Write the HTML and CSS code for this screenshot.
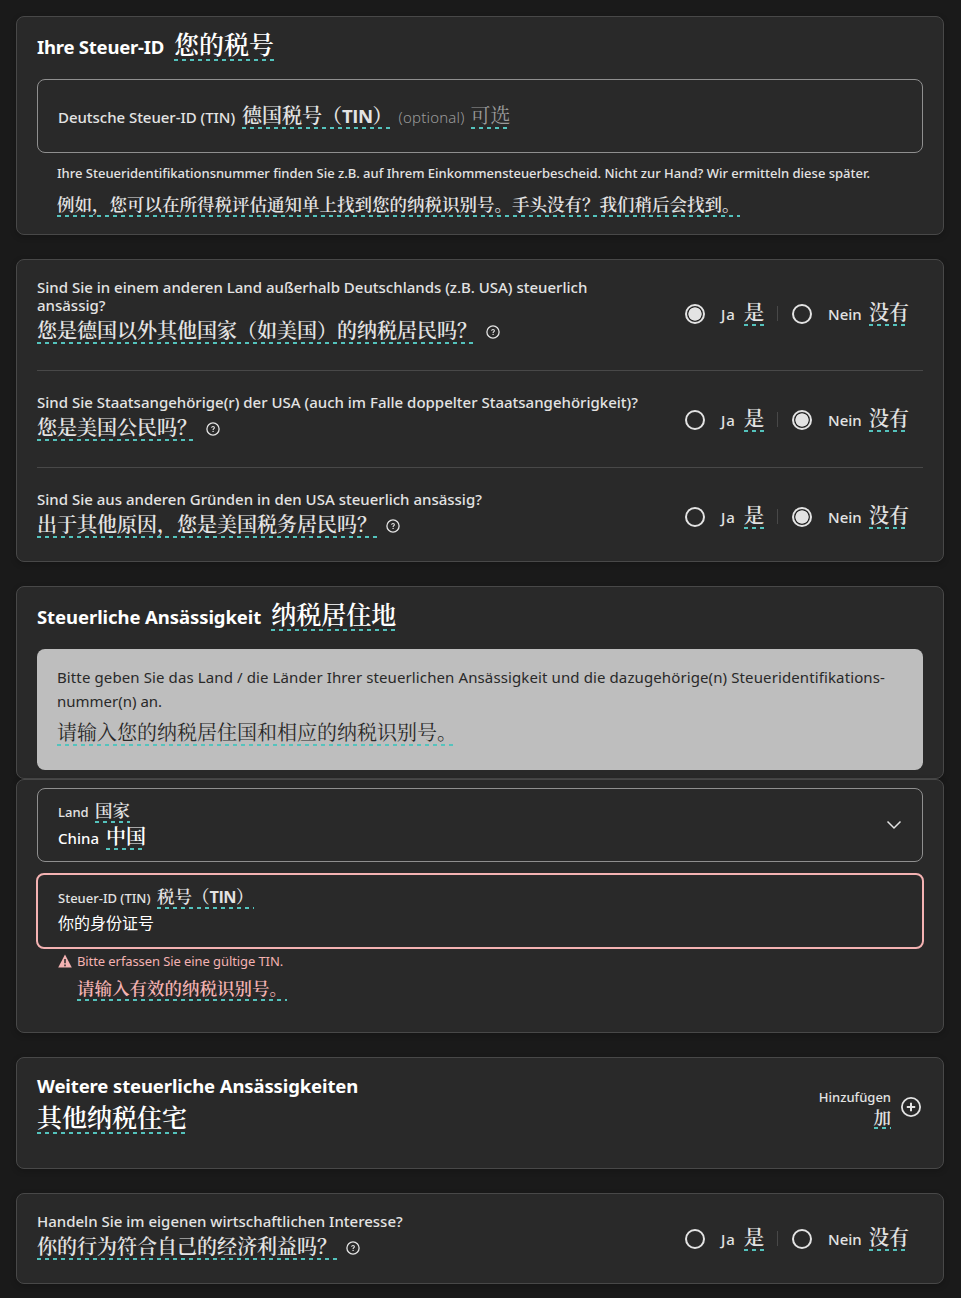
FILE: index.html
```
<!DOCTYPE html>
<html lang="de">
<head>
<meta charset="utf-8">
<title>Steuerliche Ansässigkeit</title>
<link rel="stylesheet" href="styles.css">
</head>
<body>
<svg class="defs" aria-hidden="true">
  <symbol id="help" viewBox="0 0 14 14">
    <circle cx="7" cy="7" r="6.1" fill="none" stroke="currentColor" stroke-width="1.3"/>
    <path d="M5.600 5.700C5.700 4.900 6.200 4.500 7 4.500c.9 0 1.400.5 1.400 1.200C8.400 6.600 7.100 6.700 7.100 7.900" fill="none" stroke="currentColor" stroke-width="1.1"/>
    <circle cx="7.100" cy="9.400" r=".7" fill="currentColor"/>
  </symbol>
</svg>
<main class="page">
  <section class="card card-id">
    <div class="line title"><h2 class="tight">Ihre Steuer-ID</h2><span class="zh zh-xl">您的税号</span></div>
    <div class="field field-id">
      <div class="line"><span class="label-lg label-tin">Deutsche Steuer-ID (TIN)</span><span class="zh zh-lg gap7">德国税号（<b>TIN</b>）</span><span class="optional">(optional)</span><span class="zh zh-lg zh-muted">可选</span></div>
    </div>
    <p class="hint">Ihre Steueridentifikationsnummer finden Sie z.B. auf Ihrem Einkommensteuerbescheid. Nicht zur Hand? Wir ermitteln diese später.</p>
    <span class="zh zh-md hint-zh">例如，您可以在所得税评估通知单上找到您的纳税识别号。手头没有？我们稍后会找到。</span>
  </section>

  <section class="card card-questions">
    <div class="question q-first">
      <div class="q-text">
        <p>Sind Sie in einem anderen Land außerhalb Deutschlands (z.B. USA) steuerlich<br>ansässig?</p>
        <div class="q-zh"><span class="zh zh-lg">您是德国以外其他国家（如美国）的纳税居民吗？</span><svg class="help"><use href="#help"/></svg></div>
      </div>
      <div class="choices"><i class="radio on"></i><span class="label-lg ja">Ja</span><span class="zh zh-lg">是</span><i class="sep"></i><i class="radio"></i><span class="label-lg nein">Nein</span><span class="zh zh-lg">没有</span></div>
    </div>
    <div class="question">
      <div class="q-text">
        <p>Sind Sie Staatsangehörige(r) der USA (auch im Falle doppelter Staatsangehörigkeit)?</p>
        <div class="q-zh"><span class="zh zh-lg">您是美国公民吗？</span><svg class="help"><use href="#help"/></svg></div>
      </div>
      <div class="choices"><i class="radio"></i><span class="label-lg ja">Ja</span><span class="zh zh-lg">是</span><i class="sep"></i><i class="radio on"></i><span class="label-lg nein">Nein</span><span class="zh zh-lg">没有</span></div>
    </div>
    <div class="question">
      <div class="q-text">
        <p>Sind Sie aus anderen Gründen in den USA steuerlich ansässig?</p>
        <div class="q-zh"><span class="zh zh-lg">出于其他原因，您是美国税务居民吗？</span><svg class="help"><use href="#help"/></svg></div>
      </div>
      <div class="choices"><i class="radio"></i><span class="label-lg ja">Ja</span><span class="zh zh-lg">是</span><i class="sep"></i><i class="radio on"></i><span class="label-lg nein">Nein</span><span class="zh zh-lg">没有</span></div>
    </div>
  </section>

  <section class="card card-residence">
    <div class="line title"><h2 class="loose">Steuerliche Ansässigkeit</h2><span class="zh zh-xl">纳税居住地</span></div>
    <div class="info">
      <p>Bitte geben Sie das Land / die Länder Ihrer steuerlichen Ansässigkeit und die dazugehörige(n) Steueridentifikations-<br><span class="info-rest">nummer(n) an.</span></p>
      <span class="zh zh-lg">请输入您的纳税居住国和相应的纳税识别号。</span>
    </div>
  </section>

  <section class="card card-country">
    <div class="field field-country">
      <div>
        <div class="line line-sm"><span class="label-sm">Land</span><span class="zh zh-md">国家</span></div>
        <div class="line line-value"><span class="label-lg">China</span><span class="zh zh-lg">中国</span></div>
      </div>
      <svg class="chevron" viewBox="0 0 16 10"><path d="M1.500 1.500 8 8l6.500-6.500" fill="none" stroke="currentColor" stroke-width="1.500"/></svg>
    </div>
    <div class="field field-error">
      <div class="line line-sm"><span class="label-sm">Steuer-ID (TIN)</span><span class="zh zh-md">税号（<b>TIN</b>）</span></div>
      <div class="value">你的身份证号</div>
    </div>
    <div class="error">
      <svg class="warn" viewBox="0 0 14 14"><path d="M7 .5 13.800 13.500H.2z" fill="currentColor"/><path d="M7 5v4.300M7 10.500v1.700" stroke="#292929" stroke-width="1.500"/></svg>
      <div><p>Bitte erfassen Sie eine gültige TIN.</p><span class="zh zh-md">请输入有效的纳税识别号。</span></div>
    </div>
  </section>

  <section class="card card-more">
    <div><h2>Weitere steuerliche Ansässigkeiten</h2><span class="zh zh-xl">其他纳税住宅</span></div>
    <div class="add">
      <div class="add-text"><span class="label-sm">Hinzufügen</span><span class="zh zh-md">加</span></div>
      <svg class="plus" viewBox="0 0 20 20"><circle cx="10" cy="10" r="9.100" fill="none" stroke="currentColor" stroke-width="1.800"/><path d="M10 5.800v8.400M5.800 10h8.400" stroke="currentColor" stroke-width="2"/></svg>
    </div>
  </section>

  <section class="card card-last">
    <div class="question q-last">
      <div class="q-text">
        <p>Handeln Sie im eigenen wirtschaftlichen Interesse?</p>
        <div class="q-zh"><span class="zh zh-lg">你的行为符合自己的经济利益吗？</span><svg class="help"><use href="#help"/></svg></div>
      </div>
      <div class="choices"><i class="radio"></i><span class="label-lg ja">Ja</span><span class="zh zh-lg">是</span><i class="sep"></i><i class="radio"></i><span class="label-lg nein">Nein</span><span class="zh zh-lg">没有</span></div>
    </div>
  </section>
</main>
</body>
</html>
```
FILE: styles.css
```
* { box-sizing: border-box; }
body {
  margin: 0;
  background: #1a1a1a;
  color: #e3e3e3;
  font: 500 15px/18px "Noto Sans", "Noto Sans CJK SC", sans-serif;
}
p, h2 { margin: 0; }
.defs { display: none; }
.page { height: 1298px; padding: 16px 17px 0 16px; overflow: hidden; }

.card {
  border: 1px solid #484848;
  border-radius: 8px;
  background: #292929;
  padding: 0 20px;
  margin-bottom: 24px;
  box-shadow: 0 2px 6px rgba(0, 0, 0, .2);
}
.card-id { height: 219px; padding-top: 8px; }
.card-questions { height: 303px; }
.card-residence { height: 193px; padding-top: 8px; margin-bottom: 0; }
.card-country { height: 254px; padding-top: 8px; }
.card-more { height: 112px; display: flex; justify-content: space-between; padding-top: 16px; }
.card-last { height: 91px; margin-bottom: 0; }

.line { display: flex; align-items: baseline; white-space: nowrap; }
.title { height: 54px; }
h2 { font-size: 18.5px; line-height: 24px; font-weight: 700; color: #fff; letter-spacing: -.12px; white-space: nowrap; }
.tight { letter-spacing: -.23px; }
.loose { letter-spacing: -.08px; }
.title .zh { margin-left: 10px; }

/* Translated text with a dashed underline */
.zh {
  display: inline-block;
  font-family: "Noto Serif CJK SC", "Source Han Serif SC", "Noto Serif SC", serif;
  font-weight: 600;
  white-space: nowrap;
  background: repeating-linear-gradient(90deg, #54c3bd 0 4px, transparent 4px 8px) 0 100% / 100% 2px no-repeat;
}
.zh b { font: 700 .93em/1 "Open Sans", sans-serif; letter-spacing: -.5px; }
.zh-xl { font-size: 25px; line-height: 36px; color: #fff; }
.zh-lg { font-size: 20px; line-height: 29px; }
.zh-md { font-size: 17.5px; line-height: 25px; padding-bottom: 1px; }

.label-lg { font-size: 15px; }
.label-sm { font-size: 13px; }
.label-tin { letter-spacing: -.04px; }
.optional { margin-left: 6px; font-weight: 300; color: #9b9b9b; letter-spacing: .19px; }
.zh-muted { margin-left: 6px; font-weight: 400; color: #9b9b9b; }
.gap7 { margin-left: 7px; }

.field { border: 1px solid #8f8f8f; border-radius: 8px; padding: 0 20px; }
.field-id { height: 74px; padding-top: 20px; }
.hint { margin: 11px 0 0 20px; font-size: 13px; white-space: nowrap; }
.hint-zh { margin: 9px 0 0 20px; }

.question { display: flex; justify-content: space-between; height: 97px; padding-top: 22px; border-bottom: 1px solid #484848; }
.question:last-child { border-bottom: 0; }
.q-first { height: 111px; padding-top: 18px; }
.q-last { padding-top: 18px; }
.q-text p { white-space: nowrap; }
.q-zh { display: flex; align-items: center; margin-top: 1px; }
.help { width: 14px; height: 14px; margin: 5px 0 0 9px; }

.choices { display: grid; grid-template-columns: 36px 23px 33px 15px 36px 41px 54px; align-items: baseline; height: 29px; margin-top: 10px; }
.q-first .choices { margin-top: 19px; }
.choices .zh { justify-self: start; }
.ja { letter-spacing: .9px; }
.radio { align-self: start; width: 20px; height: 20px; margin-top: 7px; border: 2px solid #e3e3e3; border-radius: 50%; }
.radio.on { background: radial-gradient(circle, #e3e3e3 6.300px, transparent 6.900px); }
.sep { align-self: start; width: 1px; height: 15px; margin-top: 9px; background: #484848; }

.info { height: 121px; padding: 16px 20px 0; border-radius: 8px; background: #bebebe; color: #292929; font-weight: 400; line-height: 24px; white-space: nowrap; }
.info p { letter-spacing: .112px; }
.info-rest { letter-spacing: 0; }
.info .zh { display: block; width: max-content; margin-top: 4px; font-weight: 400; }

.field-country { height: 74px; padding-top: 8px; display: flex; justify-content: space-between; }
.line-sm { height: 24px; }
.line-sm .zh { margin-left: 6.500px; }
.line-value .zh { margin-left: 7px; }
.line-value { color: #fff; }
.chevron { width: 16px; height: 10px; margin-top: 23px; color: #e3e3e3; }
.field-error { height: 76px; margin: 11px -1px 0; padding-top: 8px; border: 2px solid #f4b2b2; }
.value { margin-top: 3px; font: 400 16px/24px "Noto Sans CJK SC", sans-serif; color: #fff; }
.error { display: flex; padding: 3px 0 0 21px; color: #f4b2b2; }
.error p { font-size: 13px; font-weight: 400; letter-spacing: -.09px; }
.error .zh { margin-top: 5px; }
.warn { width: 14px; height: 14px; margin: 2px 5px 0 0; }

.card-more .zh-xl { display: block; width: max-content; }
.add { display: flex; }
.add-text { display: flex; flex-direction: column; align-items: flex-end; padding-top: 14px; }
.add-text .zh { line-height: 22px; }
.plus { width: 20px; height: 20px; margin: 23px 2px 0 10px; }
```
